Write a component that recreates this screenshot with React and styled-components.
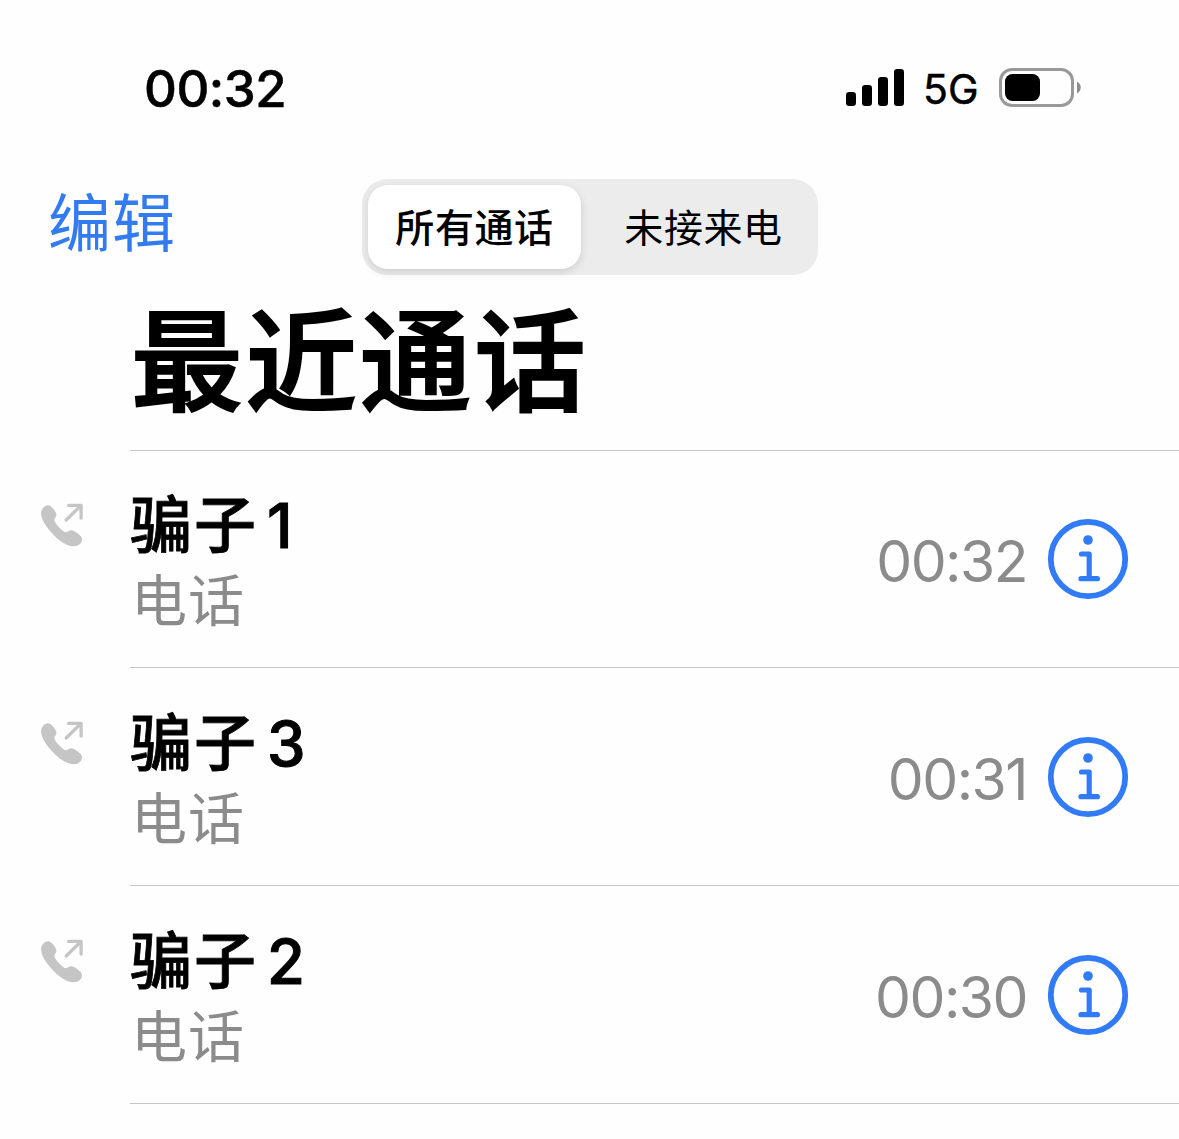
import React from "react";
import styled, { createGlobalStyle } from "styled-components";

const GlobalStyle = createGlobalStyle`
  * { box-sizing: border-box; }
  body {
    margin: 0;
    background: #fefefe;
    font-family: Inter, "Noto Sans CJK SC", sans-serif;
    color: #000;
  }
`;

const Screen = styled.main`
  width: 1179px;
  height: 1139px;
  overflow: hidden;
  display: flex;
  flex-direction: column;
`;

const StatusBar = styled.header`
  height: 179px;
  padding: 57px 97px 0 144px;
  display: flex;
  justify-content: space-between;
  align-items: flex-start;
`;

const Clock = styled.time`
  padding-top: 1px;
  font-size: 51px;
  line-height: 62px;
  font-weight: 500;
  letter-spacing: -0.5px;
  -webkit-text-stroke: 0.5px #000;
`;

const Indicators = styled.div`
  display: flex;
  align-items: flex-start;
`;

const SignalIcon = styled.svg`
  width: 60px;
  height: 38px;
  margin: 12px 18px 0 0;
`;

const Network = styled.span`
  width: 57px;
  margin-right: 18px;
  padding-top: 7px;
  font-size: 41px;
  line-height: 50px;
  font-weight: 400;
  -webkit-text-stroke: 0.5px #000;
  white-space: nowrap;
`;

const BatteryIcon = styled.svg`
  width: 84px;
  height: 40px;
  margin-top: 10px;
`;

const Toolbar = styled.nav`
  height: 96px;
  display: flex;
  align-items: flex-start;
  padding-left: 48px;
`;

const EditButton = styled.button`
  width: 314px;
  border: 0;
  padding: 0;
  background: none;
  text-align: left;
  font: 400 63px/80px "Noto Sans CJK SC", sans-serif;
  letter-spacing: 1px;
  color: #327bf0;
`;

const Segments = styled.div`
  width: 456px;
  height: 96px;
  padding: 6px;
  display: flex;
  border-radius: 25px;
  background: #ececec;
`;

const Segment = styled.button`
  width: ${(p) => (p.$active ? "213px" : "231px")};
  height: 84px;
  padding: ${(p) => (p.$active ? "0 0 4px" : "0 0 4px 14px")};
  border: 0;
  border-radius: 20px;
  background: ${(p) => (p.$active ? "#fff" : "transparent")};
  box-shadow: ${(p) => (p.$active ? "0 3px 8px rgba(0, 0, 0, 0.13)" : "none")};
  font: ${(p) => (p.$active ? 500 : 400)} 39px/80px "Noto Sans CJK SC", sans-serif;
  letter-spacing: 0.6px;
  color: #000;
  white-space: nowrap;
`;

const Title = styled.h1`
  height: 175px;
  margin: 0;
  padding: 0 0 0 131px;
  font: 500 111.5px/159px "Noto Sans CJK SC", sans-serif;
  letter-spacing: 2.9px;
  -webkit-text-stroke: 2.2px #000;
`;

const CallList = styled.ul`
  margin: 0 0 0 130px;
  padding: 0;
  list-style: none;
  border-top: 1px solid #c6c6c6;
`;

const CallRow = styled.li`
  height: ${(p) => p.$height}px;
  padding: ${(p) => p.$height - 216}px 0 0 40px;
  margin-left: -130px;
  display: flex;
  align-items: flex-start;
`;

const Divider = styled.li`
  height: 1px;
  background: #c6c6c6;
`;

const OutgoingIcon = styled.svg`
  width: 44px;
  height: 44px;
  margin: 52px 46px 0 0;
`;

const Caller = styled.div`
  flex: 1;
  display: flex;
  flex-direction: column;
`;

const Name = styled.span`
  height: 66px;
  margin-top: 41px;
  display: flex;
  gap: 9px;
  font-size: 61.5px;
  line-height: 68px;
  font-weight: 500;
  -webkit-text-stroke: 1px #000;
`;

const NameText = styled.span`
  font-family: "Noto Sans CJK SC", sans-serif;
  font-size: 62px;
  line-height: 59px;
  letter-spacing: 2px;
  -webkit-text-stroke: 0.8px #000;
`;

const Kind = styled.span`
  margin-top: 6px;
  padding-left: 1px;
  font: 400 56px/66px "Noto Sans CJK SC", sans-serif;
  letter-spacing: 1px;
  color: #8b8b8b;
`;

const CallTime = styled.time`
  margin: 76px 20px 0 0;
  font-size: 57px;
  line-height: 70px;
  letter-spacing: -1.5px;
  color: #8b8b8b;
`;

const InfoButton = styled.button`
  width: 82px;
  height: 82px;
  margin: 67px 50px 0 0;
  padding: 0;
  border: 0;
  background: none;
`;

const InfoIcon = styled.svg`
  display: block;
  width: 82px;
  height: 82px;
`;

const calls = [
  { name: "骗子", index: "1", time: "00:32", height: 216 },
  { name: "骗子", index: "3", time: "00:31", height: 217 },
  { name: "骗子", index: "2", time: "00:30", height: 217 },
];

function Info() {
  return (
    <InfoIcon viewBox="0 0 82 82" fill="none" stroke="#327bf6">
      <circle cx="41" cy="41" r="37.2" strokeWidth="5.8" />
      <circle cx="41" cy="22" r="4.8" fill="#327bf6" stroke="none" />
      <path d="M34.5 36H42.2V60.7M34 60.7H50.4" strokeWidth="5.2" strokeLinecap="round" strokeLinejoin="round" />
    </InfoIcon>
  );
}

function Outgoing() {
  return (
    <OutgoingIcon viewBox="0 0 44 44">
      <path
        d="M3.2 4.8C5.3 2.2 8.4 1.5 11 3.4C13.1 5.1 15.4 8.1 16.2 10.5C17.3 13.8 13.6 15.2 14.5 18C15.8 21.3 20.8 26.5 24.2 28.7C27.1 30.4 28.5 26.9 31.4 27.2C34.5 27.6 39.3 31 41.2 33.8C43.1 36.6 41.4 40.3 38.6 42C32.7 45.1 24.4 41.9 16.2 34.4C8.2 27 1.5 18.3 1.1 10.8C1 8.4 1.7 6.5 3.2 4.8Z"
        fill="#c5c5c5"
      />
      <path d="M26.2 17L41 2.4M28.6 2.4H41.1V15" fill="none" stroke="#c5c5c5" strokeWidth="3.3" strokeLinecap="round" strokeLinejoin="round" />
    </OutgoingIcon>
  );
}

export default function App() {
  return (
    <Screen>
      <GlobalStyle />
      <StatusBar>
        <Clock>00:32</Clock>
        <Indicators>
          <SignalIcon viewBox="0 0 60 38">
            <rect x="1" y="23" width="10" height="14" rx="3.2" />
            <rect x="17" y="16" width="10" height="21" rx="3.2" />
            <rect x="33" y="8" width="10" height="29" rx="3.2" />
            <rect x="49" y="0" width="10" height="37" rx="3.2" />
          </SignalIcon>
          <Network>5G</Network>
          <BatteryIcon viewBox="0 0 84 40">
            <rect x="2.5" y="2.5" width="72" height="36" rx="11.5" fill="none" stroke="#999" strokeWidth="3" />
            <rect x="7" y="7" width="35" height="27" rx="7.5" />
            <path d="M79 14.5C84 17 84 24 79 26.5Z" fill="#8e8e8e" />
          </BatteryIcon>
        </Indicators>
      </StatusBar>
      <Toolbar>
        <EditButton>编辑</EditButton>
        <Segments>
          <Segment $active>所有通话</Segment>
          <Segment>未接来电</Segment>
        </Segments>
      </Toolbar>
      <Title>最近通话</Title>
      <CallList>
        {calls.map((call) => (
          <React.Fragment key={call.index}>
            <CallRow $height={call.height}>
              <Outgoing />
              <Caller>
                <Name>
                  <NameText>{call.name}</NameText>
                  {call.index}
                </Name>
                <Kind>电话</Kind>
              </Caller>
              <CallTime>{call.time}</CallTime>
              <InfoButton aria-label="详情">
                <Info />
              </InfoButton>
            </CallRow>
            <Divider />
          </React.Fragment>
        ))}
      </CallList>
    </Screen>
  );
}
